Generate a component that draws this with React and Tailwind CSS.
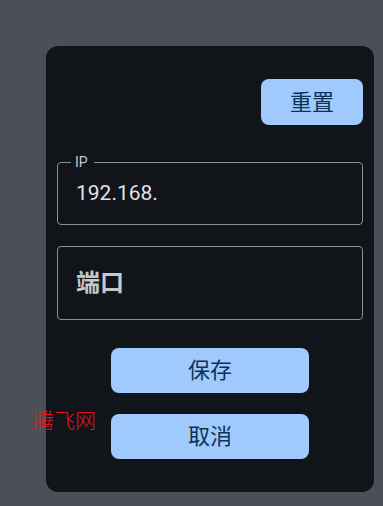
import React, { useState } from 'react';

const font = { fontFamily: 'Roboto, "Noto Sans CJK SC", sans-serif' };

const App = () => {
  const [ip, setIp] = useState('192.168.');
  const [port, setPort] = useState('');

  return (
    <div className="relative min-h-[506px] w-full bg-[#4b4f57] pl-[46px] pr-[9px] pt-[46px] pb-[14px]" style={font}>
      <div className="flex flex-col rounded-[12px] bg-[#111418] px-[11px] pt-[33px] pb-[33px]">
        <div className="flex justify-end">
          <button className="h-[46px] w-[102px] rounded-[8px] bg-[#a0cafd] text-[22px] text-[#0d3358]">
            重置
          </button>
        </div>

        {/* IP field */}
        <div className="relative mt-[37px] flex h-[63px] items-center rounded-[4px] border border-[#8c9198] px-[18px]">
          <span className="absolute -top-[9px] left-[13px] bg-[#111418] pl-[4px] pr-[6px] text-[14px] leading-[16px] text-[#c4c7ce]">IP</span>
          <input
            value={ip}
            onChange={e => setIp(e.target.value)}
            className="w-full bg-transparent text-[21px] text-[#e1e2e8] outline-none"
          />
        </div>

        {/* port field */}
        <div className="mt-[21px] flex h-[74px] items-center rounded-[4px] border border-[#8c9198] px-[18px]">
          <input
            value={port}
            onChange={e => setPort(e.target.value)}
            placeholder="端口"
            className="w-full bg-transparent text-[24px] font-bold text-[#e1e2e8] outline-none placeholder:text-[#c4c7ce]"
          />
        </div>

        <div className="mt-[28px] flex flex-col items-center gap-[21px]">
          <button className="h-[45px] w-[198px] rounded-[8px] bg-[#a0cafd] text-[22px] text-[#0d3358]">保存</button>
          <button className="h-[45px] w-[198px] rounded-[8px] bg-[#a0cafd] text-[22px] text-[#0d3358]">取消</button>
        </div>
      </div>

      {/* watermark */}
      <div className="absolute left-[33px] top-[405px] text-[21px] font-light leading-[28px] text-[#e8101e]" style={{ fontFamily: '"Noto Sans CJK SC", sans-serif' }}>
        腾飞网
      </div>
    </div>
  );
};

export default App;
